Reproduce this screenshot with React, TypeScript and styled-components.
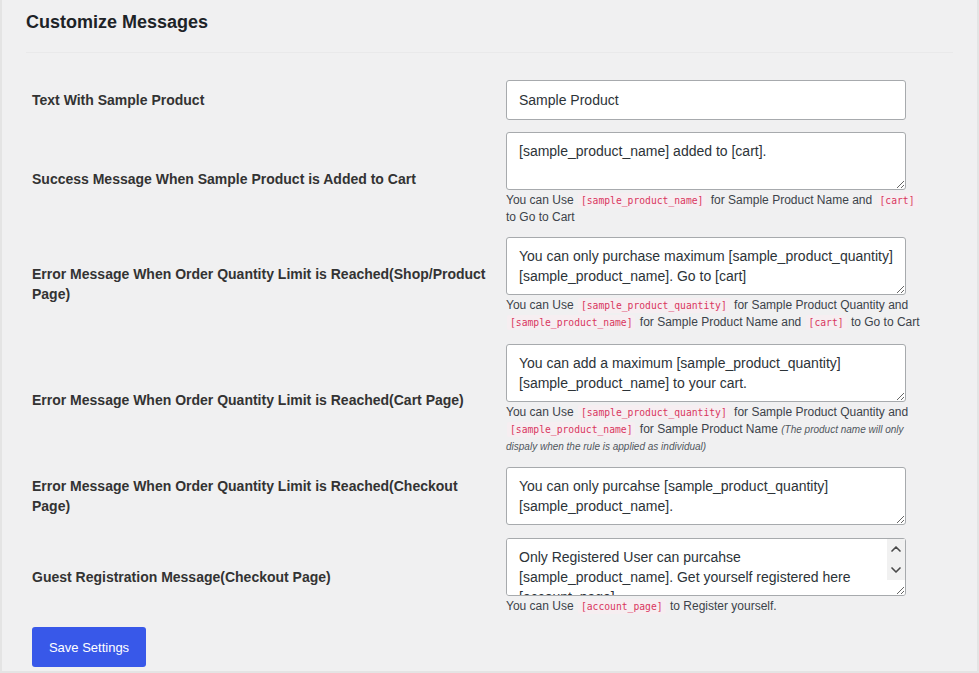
import React from "react";
import styled, { createGlobalStyle } from "styled-components";
import { ChevronUp, ChevronDown } from "lucide-react";

const Global = createGlobalStyle`
  html, body { margin: 0; padding: 0; background: #f0f0f1; }
  body { font-family: "Liberation Sans", Arial, sans-serif; color: #3c434a; }
`;

const Panel = styled.div`
  box-sizing: border-box;
  width: 979px;
  height: 673px;
  background: #f0f0f1;
  border: 2px solid #e4e4e4;
  border-top: none;
  overflow: hidden;
`;

const Header = styled.div`
  margin: 0 24px;
  padding: 10px 0 18px;
  border-bottom: 1px solid #e9e9ea;
`;

const Title = styled.h2`
  margin: 0;
  font-size: 18px;
  line-height: 24px;
  font-weight: 700;
  color: #1d2327;
`;

const Form = styled.div`
  margin: 21px 0 0 24px;
  display: flex;
  flex-direction: column;
`;

const Row = styled.div<{ $extra?: number }>`
  display: grid;
  grid-template-columns: 480px 422px;
  align-items: center;
  padding: 6px 0 ${(p) => 6 + (p.$extra ?? 0)}px;
`;

const Label = styled.div`
  padding: 0 16px 0 6px;
  font-size: 14px;
  line-height: 20px;
  font-weight: 700;
  color: #333;
`;

const Field = styled.div`
  display: flex;
  flex-direction: column;
`;

const Input = styled.input`
  box-sizing: border-box;
  width: 400px;
  height: 40px;
  padding: 0 12px;
  font-family: "Liberation Sans", Arial, sans-serif;
  font-size: 14px;
  color: #2c3338;
  background: #fff;
  border: 1px solid #a7aaad;
  border-radius: 3px;
  outline: none;
`;

const Area = styled.textarea<{ $scroll?: boolean }>`
  box-sizing: border-box;
  width: 400px;
  height: 58px;
  padding: ${(p) => (p.$scroll ? "8px 30px 8px 12px" : "8px 12px")};
  font-family: "Liberation Sans", Arial, sans-serif;
  font-size: 14px;
  line-height: 20px;
  color: #2c3338;
  background: #fff;
  border: 1px solid #a7aaad;
  border-radius: 3px;
  outline: none;
  display: block;
  overflow: auto;
  scrollbar-width: none;
`;

const AreaWrap = styled.div`
  position: relative;
  width: 400px;
`;

const ScrollRail = styled.div`
  position: absolute;
  top: 1px;
  right: 1px;
  width: 18px;
  height: 41px;
  background: #f1f1f1;
  display: flex;
  flex-direction: column;
  align-items: center;
  justify-content: space-around;
  color: #4a4a4a;
  pointer-events: none;
`;

const Hint = styled.div`
  margin-top: 2px;
  font-size: 12px;
  line-height: 16px;
  color: #3c434a;
`;

const Code = styled.code`
  font-family: "DejaVu Sans Mono", "Liberation Mono", monospace;
  font-size: 9.7px;
  color: #d9365f;
  background: #f6eef1;
  padding: 2px 3px;
  margin: 0 1px;
  border-radius: 2px;
`;

const Note = styled.em`
  font-size: 10px;
  color: #50575e;
`;

const SaveButton = styled.button`
  margin: 6px 0 0 6px;
  align-self: flex-start;
  width: 114px;
  height: 40px;
  background: #3858e9;
  color: #fff;
  border: none;
  border-radius: 3px;
  font-family: "Liberation Sans", Arial, sans-serif;
  font-size: 13px;
  cursor: pointer;
`;

export default function App() {
  return (
    <>
      <Global />
      <Panel>
        <Header>
          <Title>Customize Messages</Title>
        </Header>
        <Form>
          <Row>
            <Label>Text With Sample Product</Label>
            <Field>
              <Input defaultValue="Sample Product" />
            </Field>
          </Row>
          <Row>
            <Label>Success Message When Sample Product is Added to Cart</Label>
            <Field>
              <Area defaultValue="[sample_product_name] added to [cart]." />
              <Hint>
                You can Use <Code>[sample_product_name]</Code> for Sample Product Name and{" "}
                <Code>[cart]</Code> to Go to Cart
              </Hint>
            </Field>
          </Row>
          <Row $extra={1}>
            <Label>Error Message When Order Quantity Limit is Reached(Shop/Product Page)</Label>
            <Field>
              <Area defaultValue="You can only purchase maximum [sample_product_quantity] [sample_product_name]. Go to [cart]" />
              <Hint>
                You can Use <Code>[sample_product_quantity]</Code> for Sample Product Quantity and{" "}
                <Code>[sample_product_name]</Code> for Sample Product Name and{" "}
                <Code>[cart]</Code> to Go to Cart
              </Hint>
            </Field>
          </Row>
          <Row>
            <Label>Error Message When Order Quantity Limit is Reached(Cart Page)</Label>
            <Field>
              <Area defaultValue="You can add a maximum [sample_product_quantity] [sample_product_name] to your cart." />
              <Hint>
                You can Use <Code>[sample_product_quantity]</Code> for Sample Product Quantity and{" "}
                <Code>[sample_product_name]</Code> for Sample Product Name{" "}
                <Note>(The product name will only dispaly when the rule is applied as individual)</Note>
              </Hint>
            </Field>
          </Row>
          <Row $extra={1}>
            <Label>Error Message When Order Quantity Limit is Reached(Checkout Page)</Label>
            <Field>
              <Area defaultValue="You can only purcahse [sample_product_quantity] [sample_product_name]." />
            </Field>
          </Row>
          <Row>
            <Label>Guest Registration Message(Checkout Page)</Label>
            <Field>
              <AreaWrap>
                <Area
                  $scroll
                  defaultValue="Only Registered User can purcahse [sample_product_name]. Get yourself registered here [account_page]"
                />
                <ScrollRail>
                  <ChevronUp size={16} strokeWidth={2.5} />
                  <ChevronDown size={16} strokeWidth={2.5} />
                </ScrollRail>
              </AreaWrap>
              <Hint>
                You can Use <Code>[account_page]</Code> to Register yourself.
              </Hint>
            </Field>
          </Row>
          <SaveButton>Save Settings</SaveButton>
        </Form>
      </Panel>
    </>
  );
}
